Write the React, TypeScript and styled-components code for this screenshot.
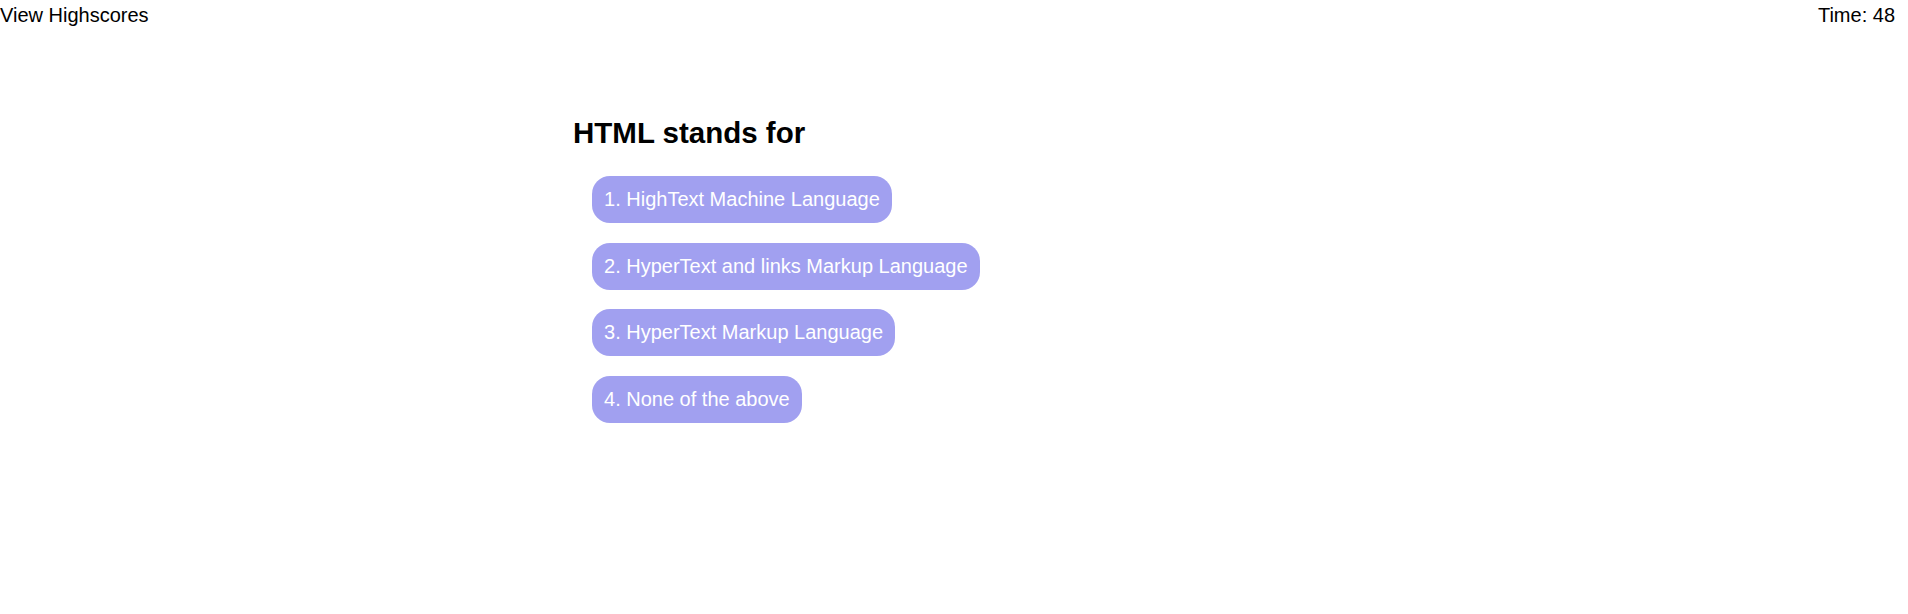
import React from "react";
import styled, { createGlobalStyle } from "styled-components";

const Global = createGlobalStyle`
  html, body { margin: 0; padding: 0; background: #ffffff; }
  body { font-family: "Liberation Sans", Arial, sans-serif; color: #000; }
`;

const Header = styled.header`
  display: flex;
  justify-content: space-between;
  align-items: flex-start;
  padding: 0 13px 0 0;
  font-size: 20px;
  line-height: 30px;
`;

const HeaderLink = styled.span`
  color: #000;
  cursor: pointer;
`;

const Timer = styled.span`
  color: #000;
`;

const Quiz = styled.main`
  width: 762px;
  margin: 86px auto 0;
  display: flex;
  flex-direction: column;
  align-items: flex-start;
`;

const Question = styled.h2`
  margin: 0 0 26px;
  font-size: 29.5px;
  font-weight: 700;
  line-height: 34px;
`;

const Choices = styled.ol`
  list-style: none;
  margin: 0;
  padding: 0 0 0 19px;
  display: flex;
  flex-direction: column;
  align-items: flex-start;
  gap: 19.67px;
`;

const Choice = styled.li`
  display: block;
`;

const ChoiceButton = styled.button`
  display: block;
  border: none;
  margin: 0;
  padding: 12px 12px;
  height: 47px;
  border-radius: 18px;
  background: #a1a0f0;
  color: #ffffff;
  font-family: "Liberation Sans", Arial, sans-serif;
  font-size: 20px;
  line-height: 23px;
  cursor: pointer;
  white-space: nowrap;
`;

const choices = [
  "HighText Machine Language",
  "HyperText and links Markup Language",
  "HyperText Markup Language",
  "None of the above",
];

export default function App() {
  return (
    <>
      <Global />
      <Header>
        <HeaderLink>View Highscores</HeaderLink>
        <Timer>Time: 48</Timer>
      </Header>
      <Quiz>
        <Question>HTML stands for</Question>
        <Choices>
          {choices.map((c, i) => (
            <Choice key={c}>
              <ChoiceButton>
                {i + 1}. {c}
              </ChoiceButton>
            </Choice>
          ))}
        </Choices>
      </Quiz>
    </>
  );
}
